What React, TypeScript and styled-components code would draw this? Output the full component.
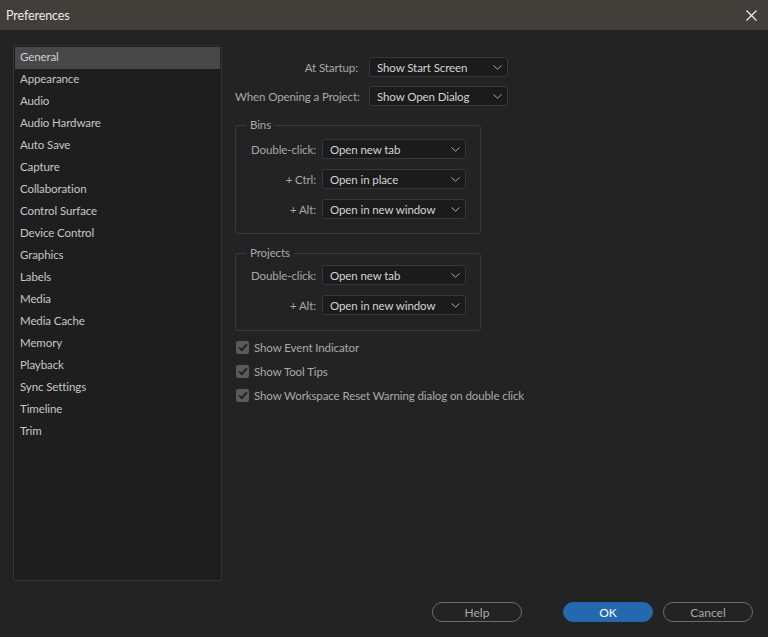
import React, { useState } from "react";
import styled, { createGlobalStyle } from "styled-components";

const GlobalStyle = createGlobalStyle`
  html, body {
    margin: 0;
    padding: 0;
    background: #232323;
  }
  * {
    box-sizing: border-box;
  }
`;

const sections = [
  "General",
  "Appearance",
  "Audio",
  "Audio Hardware",
  "Auto Save",
  "Capture",
  "Collaboration",
  "Control Surface",
  "Device Control",
  "Graphics",
  "Labels",
  "Media",
  "Media Cache",
  "Memory",
  "Playback",
  "Sync Settings",
  "Timeline",
  "Trim",
];

const Window = styled.div`
  width: 768px;
  height: 637px;
  display: flex;
  flex-direction: column;
  background: #232323;
  font-family: Lato, "Open Sans", sans-serif;
  font-size: 11.5px;
  letter-spacing: -0.1px;
  color: #c4c4c4;
  overflow: hidden;
`;

const TitleBar = styled.div`
  height: 30px;
  flex-shrink: 0;
  display: flex;
  align-items: center;
  justify-content: space-between;
  padding: 0 10px 0 6px;
  background: #423e3a;
`;

const Title = styled.span`
  font-size: 12.5px;
  color: #ececec;
`;

const CloseButton = styled.button`
  width: 14px;
  height: 14px;
  padding: 0;
  border: none;
  background: none;
  display: flex;
  align-items: center;
  justify-content: center;
  cursor: pointer;
`;

const Body = styled.div`
  flex: 1;
  display: flex;
  gap: 13px;
  padding: 15px 0 0 13px;
  min-height: 0;
`;

const Sidebar = styled.ul`
  width: 209px;
  margin: 0;
  padding: 1px;
  list-style: none;
  background: #1e1e1e;
  border: 1px solid #353535;
  border-radius: 2px;
`;

const SidebarItem = styled.li<{ $active?: boolean }>`
  height: 22px;
  line-height: 20px;
  padding-left: 5px;
  color: ${({ $active }) => ($active ? "#d0d0d0" : "#c6c6c6")};
  background: ${({ $active }) => ($active ? "#484848" : "transparent")};
  cursor: default;
`;

const Content = styled.div`
  display: flex;
  flex-direction: column;
  padding-top: 12px;
`;

const TopGrid = styled.div`
  display: grid;
  grid-template-columns: 123px 139px;
  column-gap: 11px;
  row-gap: 9px;
  align-items: center;
`;

const Label = styled.span`
  text-align: right;
  color: #a8a8a8;
  white-space: nowrap;
`;

const SelectBox = styled.div<{ $width: number }>`
  width: ${({ $width }) => $width}px;
  height: 20px;
  display: flex;
  align-items: center;
  justify-content: space-between;
  padding: 0 5px 0 7px;
  background: #1b1b1b;
  border: 1px solid #383838;
  border-radius: 3px;
  color: #d4d4d4;
  white-space: nowrap;
`;

const Group = styled.fieldset<{ $top: number; $padTop: number; $padBottom: number }>`
  width: 246px;
  margin: ${({ $top }) => $top}px 0 0;
  padding: ${({ $padTop, $padBottom }) => `${$padTop}px 14px ${$padBottom}px 9px`};
  border: 1px solid #3a3a3a;
  border-radius: 3px;
`;

const Legend = styled.legend`
  padding: 0 4px;
  margin-left: 1px;
  line-height: 14px;
  color: #a8a8a8;
`;

const GroupGrid = styled.div`
  display: grid;
  grid-template-columns: 71px 144px;
  column-gap: 6px;
  row-gap: 10px;
  align-items: center;
`;

const Checks = styled.div`
  display: flex;
  flex-direction: column;
  gap: 8px;
  margin-top: 8px;
`;

const CheckRow = styled.label`
  display: flex;
  align-items: center;
  gap: 5px;
  height: 16px;
  padding-left: 1px;
  color: #a9a9a9;
  white-space: nowrap;
`;

const CheckBox = styled.span`
  width: 13px;
  height: 13px;
  border-radius: 2px;
  background: #5a5a5a;
  display: flex;
  align-items: center;
  justify-content: center;
`;

const Footer = styled.div`
  flex-shrink: 0;
  display: flex;
  justify-content: flex-end;
  padding: 21px 15px 15px 0;
`;

const Button = styled.button<{ $primary?: boolean; $gap: number }>`
  width: 90px;
  height: 20px;
  margin-left: ${({ $gap }) => $gap}px;
  padding: 0;
  border-radius: 10px;
  font-family: inherit;
  font-size: 12px;
  border: 1px solid ${({ $primary }) => ($primary ? "#2468b0" : "#6c6c6c")};
  background: ${({ $primary }) => ($primary ? "#2468b0" : "transparent")};
  color: ${({ $primary }) => ($primary ? "#ffffff" : "#aaaaaa")};
  cursor: pointer;
`;

const Chevron = () => (
  <svg width="9" height="5" viewBox="0 0 9 5">
    <path d="M0.5 0.5 L4.5 4.2 L8.5 0.5" fill="none" stroke="#a8a8a8" strokeWidth="1" />
  </svg>
);

const Select = ({ value, width }: { value: string; width: number }) => (
  <SelectBox $width={width}>
    <span>{value}</span>
    <Chevron />
  </SelectBox>
);

const Check = ({ label }: { label: string }) => (
  <CheckRow>
    <CheckBox>
      <svg width="10" height="9" viewBox="0 0 10 9">
        <path d="M1.2 4.6 L3.8 7.2 L8.8 1.4" fill="none" stroke="#1c1c1c" strokeWidth="1.8" />
      </svg>
    </CheckBox>
    {label}
  </CheckRow>
);

const App: React.FC = () => {
  const [active, setActive] = useState<string>("General");

  return (
    <Window>
      <GlobalStyle />
      <TitleBar>
        <Title>Preferences</Title>
        <CloseButton aria-label="Close">
          <svg width="11" height="11" viewBox="0 0 11 11">
            <path d="M0.5 0.5 L10.5 10.5 M10.5 0.5 L0.5 10.5" stroke="#f0f0f0" strokeWidth="1.2" />
          </svg>
        </CloseButton>
      </TitleBar>
      <Body>
        <Sidebar>
          {sections.map((s) => (
            <SidebarItem key={s} $active={s === active} onClick={() => setActive(s)}>
              {s}
            </SidebarItem>
          ))}
        </Sidebar>
        <Content>
          <TopGrid>
            <Label>At Startup:</Label>
            <Select value="Show Start Screen" width={139} />
            <Label>When Opening a Project:</Label>
            <Select value="Show Open Dialog" width={139} />
          </TopGrid>
          <Group $top={12} $padTop={7} $padBottom={14}>
            <Legend>Bins</Legend>
            <GroupGrid>
              <Label>Double-click:</Label>
              <Select value="Open new tab" width={144} />
              <Label>+ Ctrl:</Label>
              <Select value="Open in place" width={144} />
              <Label>+ Alt:</Label>
              <Select value="Open in new window" width={144} />
            </GroupGrid>
          </Group>
          <Group $top={12} $padTop={5} $padBottom={15}>
            <Legend>Projects</Legend>
            <GroupGrid>
              <Label>Double-click:</Label>
              <Select value="Open new tab" width={144} />
              <Label>+ Alt:</Label>
              <Select value="Open in new window" width={144} />
            </GroupGrid>
          </Group>
          <Checks>
            <Check label="Show Event Indicator" />
            <Check label="Show Tool Tips" />
            <Check label="Show Workspace Reset Warning dialog on double click" />
          </Checks>
        </Content>
      </Body>
      <Footer>
        <Button $gap={0}>Help</Button>
        <Button $primary $gap={41}>OK</Button>
        <Button $gap={10}>Cancel</Button>
      </Footer>
    </Window>
  );
};

export default App;
